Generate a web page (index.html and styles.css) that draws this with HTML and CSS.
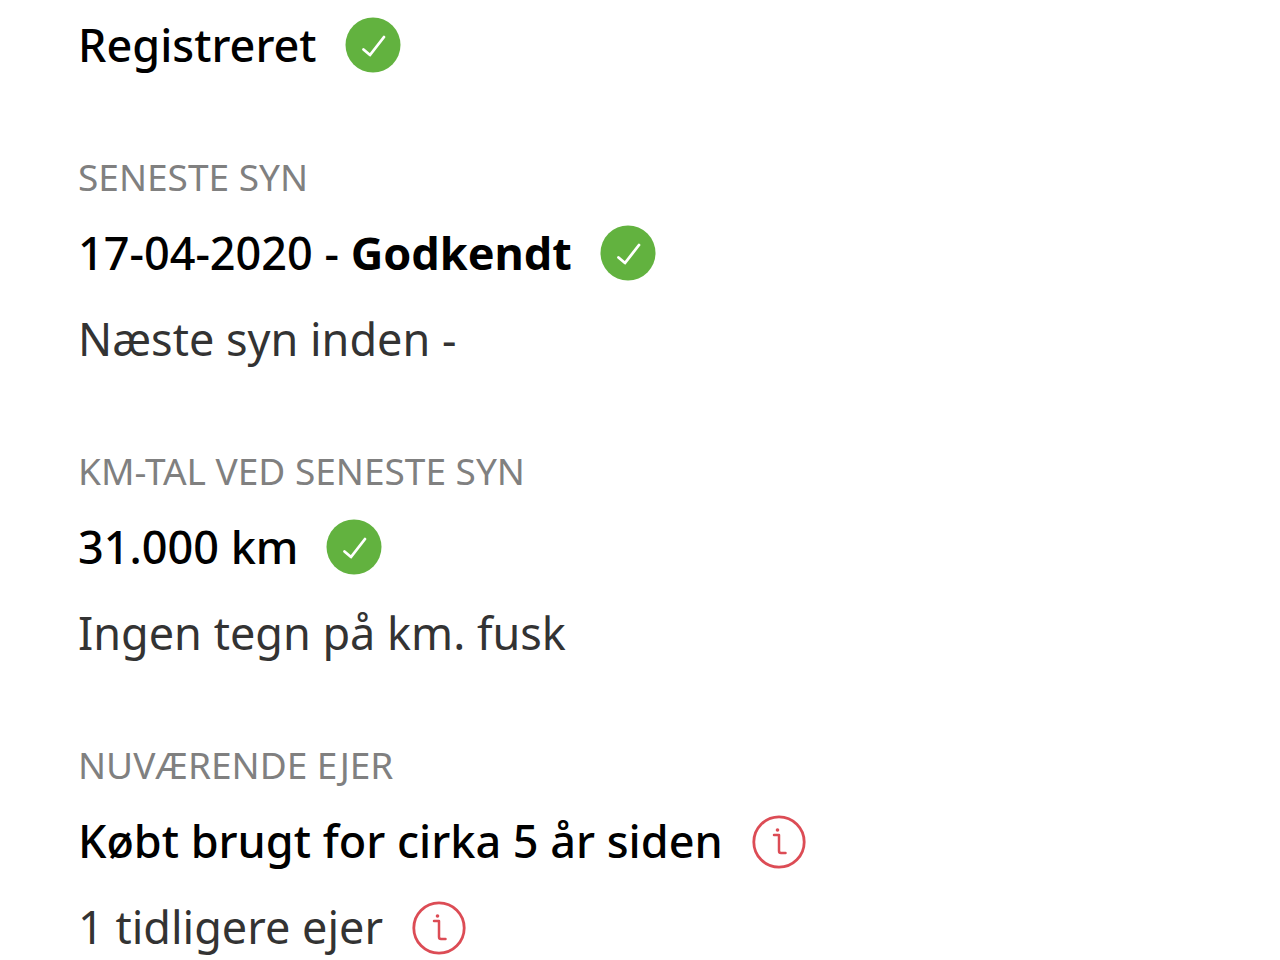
FILE: index.html
```html
<!DOCTYPE html>
<html lang="da">
<head>
    <meta charset="UTF-8">
    <meta name="viewport" content="width=device-width, initial-scale=1.0">
    <title>Køretøj</title>
    <link rel="stylesheet" href="styles.css">
</head>
<body>
    <svg class="symbols" aria-hidden="true">
        <symbol id="check" viewBox="0 0 56 56">
            <circle cx="28" cy="28" r="27.5" fill="#62b23f"/>
            <path d="M18.500 32.500l6.500 5.500L39 20" fill="none" stroke="#fff" stroke-width="2.800" stroke-linecap="round" stroke-linejoin="round"/>
        </symbol>
        <symbol id="info" viewBox="0 0 56 56">
            <circle cx="28" cy="29" r="25.2" fill="none" stroke="#dc4c55" stroke-width="2.800"/>
            <circle cx="26.500" cy="17" r="1.800" fill="#dc4c55"/>
            <path d="M23 22h5v16q0 2 2 2h4.500" fill="none" stroke="#dc4c55" stroke-width="2.500" stroke-linecap="round" stroke-linejoin="round"/>
        </symbol>
    </svg>
    <main class="report">
        <section class="entry">
            <p class="value">Registreret <svg class="icon"><use href="#check"/></svg></p>
        </section>
        <section class="entry">
            <h2 class="label">Seneste syn</h2>
            <p class="value"><span>17-04-2020 - <strong>Godkendt</strong></span> <svg class="icon"><use href="#check"/></svg></p>
            <p class="value note">Næste syn inden -</p>
        </section>
        <section class="entry">
            <h2 class="label">Km-tal ved seneste syn</h2>
            <p class="value">31.000 km <svg class="icon"><use href="#check"/></svg></p>
            <p class="value note">Ingen tegn på km. fusk</p>
        </section>
        <section class="entry">
            <h2 class="label">Nuværende ejer</h2>
            <p class="value">Købt brugt for cirka 5 år siden <svg class="icon"><use href="#info"/></svg></p>
            <p class="value note">1 tidligere ejer <svg class="icon"><use href="#info"/></svg></p>
        </section>
    </main>
</body>
</html>
```
FILE: styles.css
```css
body {
    margin: 0;
    background-color: #fff;
    color: #000;
    font-family: "Noto Sans", sans-serif;
}
.symbols {
    display: none;
}
.report {
    padding: 2px 78px 0;
}
.entry {
    margin-bottom: 64px;
}
.entry:last-child {
    margin-bottom: 0;
}
.label {
    margin: 0 0 8px;
    color: #808080;
    font-size: 37px;
    font-weight: 400;
    line-height: 50px;
    text-transform: uppercase;
}
.value {
    display: flex;
    align-items: center;
    gap: 28px;
    margin: 0;
    font-size: 45px;
    font-weight: 500;
    line-height: 86px;
}
.value strong {
    font-weight: 700;
}
.note {
    color: #333;
    font-weight: 400;
}
.icon {
    width: 56px;
    height: 56px;
    flex: none;
}
```
